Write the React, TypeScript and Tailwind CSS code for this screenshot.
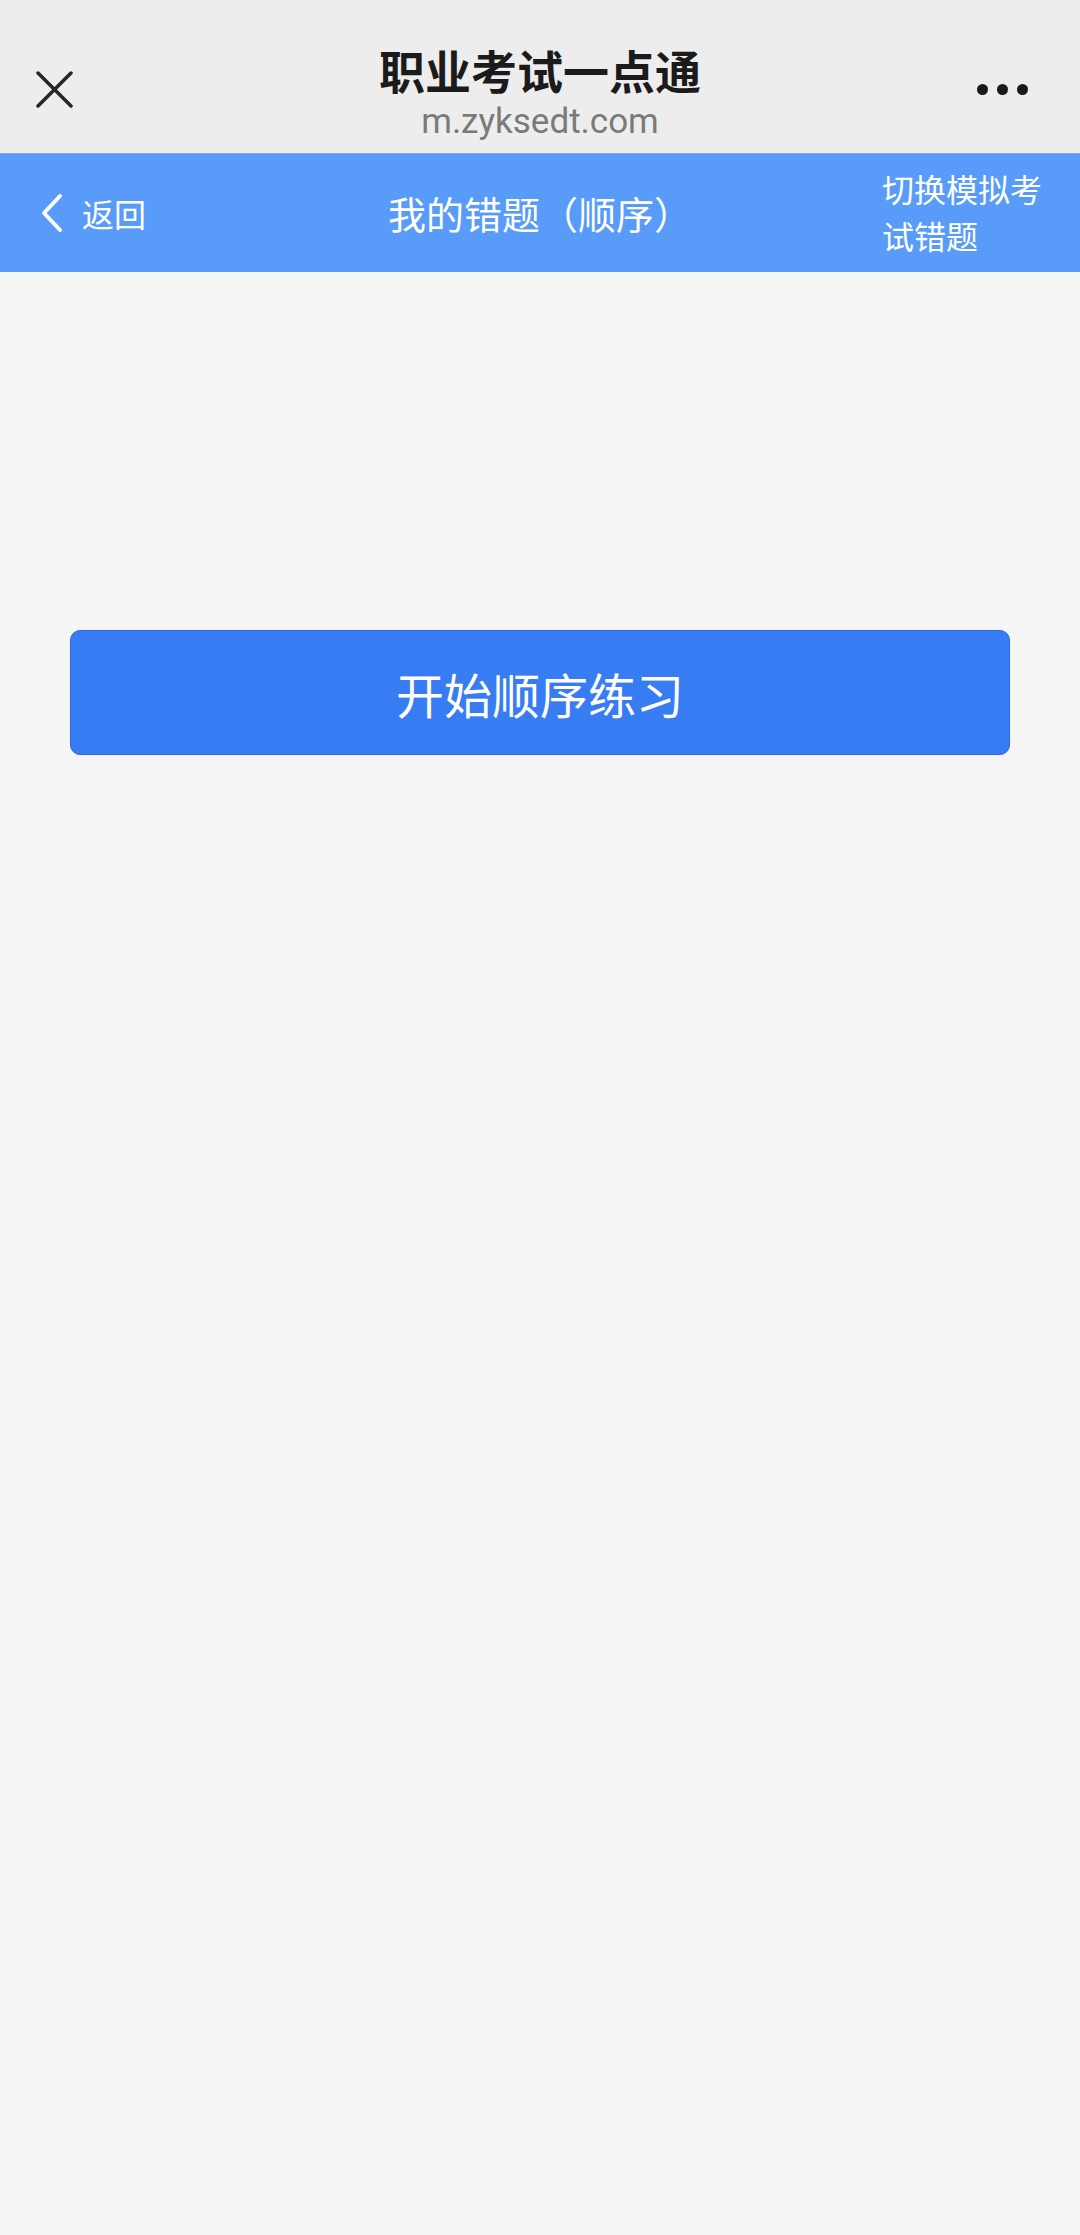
import React from "react";

const cjk = { fontFamily: '"Noto Sans CJK SC", "Noto Sans", sans-serif' };

const TopBar: React.FC = () => (
  <div className="grid h-[153px] grid-cols-[198px_1fr_198px] items-center bg-[#ededed] pt-[26px]">
    <div className="pl-[36px]">
      <svg width="37" height="37" viewBox="0 0 37 37" fill="none">
        <path
          d="M2 2 L35 35 M35 2 L2 35"
          stroke="#262626"
          strokeWidth="3.5"
          strokeLinecap="round"
        />
      </svg>
    </div>
    <div className="flex flex-col items-center pt-[4px]">
      <h1
        className="text-[46px] leading-[54px] font-semibold text-[#1b1b1b]"
        style={cjk}
      >
        职业考试一点通
      </h1>
      <p
        className="mt-[6px] text-[35px] leading-[40px] text-[#7a7a7a]"
        style={{ fontFamily: "Roboto, sans-serif" }}
      >
        m.zyksedt.com
      </p>
    </div>
    <div className="flex items-center justify-end gap-[9px] pr-[52px]">
      <span className="size-[11px] rounded-full bg-[#1a1a1a]" />
      <span className="size-[11px] rounded-full bg-[#1a1a1a]" />
      <span className="size-[11px] rounded-full bg-[#1a1a1a]" />
    </div>
  </div>
);

const NavBar: React.FC = () => (
  <div
    className="grid h-[119px] grid-cols-[198px_1fr_198px] items-center border-t border-[#78b0fb] bg-[#589bf8] text-white"
    style={cjk}
  >
    <div className="flex items-center gap-[18px] pl-[40px]">
      <svg width="24" height="40" viewBox="0 0 24 40" fill="none">
        <path
          d="M20 3 L4 20 L20 37"
          stroke="#ffffff"
          strokeWidth="4"
          strokeLinecap="round"
          strokeLinejoin="round"
        />
      </svg>
      <span className="text-[32px] leading-[40px]">返回</span>
    </div>
    <div className="text-center text-[38px] leading-[46px]">我的错题（顺序）</div>
    <div className="w-[165px] pb-[2px] text-[32px] leading-[47px]">
      切换模拟考试错题
    </div>
  </div>
);

export default function App() {
  return (
    <div className="min-h-[2235px] bg-[#f5f5f5]">
      <TopBar />
      <NavBar />
      <div className="px-[70px] pt-[358px]">
        <button
          className="flex h-[125px] w-full items-center justify-center rounded-[10px] border border-[#2e6fdd] bg-[#377cf3] text-[48px] text-white"
          style={cjk}
        >
          开始顺序练习
        </button>
      </div>
    </div>
  );
}
